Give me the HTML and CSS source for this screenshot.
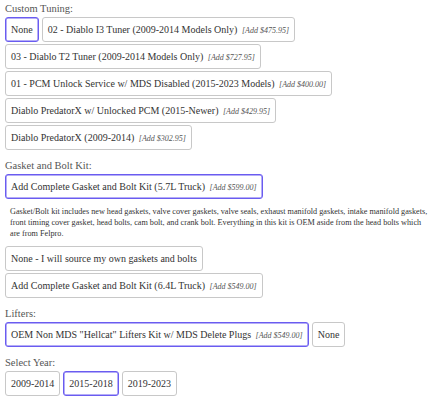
FILE: index.html
```html
<!DOCTYPE html>
<html lang="en">
<head>
    <meta charset="UTF-8">
    <meta name="viewport" content="width=device-width, initial-scale=1.0">
    <title>Product Options</title>
    <link rel="stylesheet" href="styles.css">
</head>
<body>

<form class="opcoes">
    <!-- Custom Tuning -->
    <div class="secao">
        <div class="titulo">Custom Tuning:</div>
        <div class="botoes">
            <button type="button" class="opcao ativa">None</button>
            <button type="button" class="opcao">02 - Diablo I3 Tuner (2009-2014 Models Only) <span class="preco">[Add $475.95]</span></button>
            <button type="button" class="opcao">03 - Diablo T2 Tuner (2009-2014 Models Only) <span class="preco">[Add $727.95]</span></button>
            <button type="button" class="opcao">01 - PCM Unlock Service w/ MDS Disabled (2015-2023 Models) <span class="preco">[Add $400.00]</span></button>
            <button type="button" class="opcao">Diablo PredatorX w/ Unlocked PCM (2015-Newer) <span class="preco">[Add $429.95]</span></button>
            <button type="button" class="opcao">Diablo PredatorX (2009-2014) <span class="preco">[Add $302.95]</span></button>
        </div>
    </div>

    <!-- Gasket and Bolt Kit -->
    <div class="secao">
        <div class="titulo">Gasket and Bolt Kit:</div>
        <div class="botoes">
            <button type="button" class="opcao ativa">Add Complete Gasket and Bolt Kit (5.7L Truck) <span class="preco">[Add $599.00]</span></button>
        </div>
        <p class="descricao">Gasket/Bolt kit includes new head gaskets, valve cover gaskets, valve seals, exhaust manifold gaskets, intake manifold gaskets, front timing cover gasket, head bolts, cam bolt, and crank bolt. Everything in this kit is OEM aside from the head bolts which are from Felpro.</p>
        <div class="botoes">
            <button type="button" class="opcao">None - I will source my own gaskets and bolts</button>
            <button type="button" class="opcao">Add Complete Gasket and Bolt Kit (6.4L Truck) <span class="preco">[Add $549.00]</span></button>
        </div>
    </div>

    <!-- Lifters -->
    <div class="secao">
        <div class="titulo">Lifters:</div>
        <div class="botoes">
            <button type="button" class="opcao ativa">OEM Non MDS "Hellcat" Lifters Kit w/ MDS Delete Plugs <span class="preco">[Add $549.00]</span></button>
            <button type="button" class="opcao">None</button>
        </div>
    </div>

    <!-- Select Year -->
    <div class="secao">
        <div class="titulo">Select Year:</div>
        <div class="botoes">
            <button type="button" class="opcao">2009-2014</button>
            <button type="button" class="opcao ativa">2015-2018</button>
            <button type="button" class="opcao">2019-2023</button>
        </div>
    </div>
</form>

</body>
</html>
```

FILE: styles.css
```css
/* Estilos Gerais */
body {
    font-family: "Liberation Serif", "Times New Roman", serif;
    background-color: #fff;
    color: #333;
    margin: 0;
    padding: 2px 5px;
}

.secao {
    margin-top: 7px;
}

.secao:first-child {
    margin-top: 0;
}

.titulo {
    font-size: 10.5px;
    line-height: 13px;
    color: #555;
    margin-bottom: 2px;
}

/* Botões de opção */
.botoes {
    display: flex;
    flex-wrap: wrap;
    column-gap: 3px;
}

.opcao {
    font-family: inherit;
    font-size: 10px;
    color: #333;
    background: #fff;
    height: 25px;
    padding: 0 5px;
    margin-bottom: 2px;
    border: 1px solid #c8c8c8;
    border-radius: 3px;
    white-space: nowrap;
    cursor: pointer;
}

.opcao.ativa {
    border-color: #6a5cf0;
    box-shadow: inset 0 0 0 0.5px #6a5cf0;
}

.preco {
    font-size: 8px;
    font-style: italic;
    color: #555;
    margin-left: 2px;
}

.descricao {
    font-size: 8.2px;
    line-height: 11px;
    color: #333;
    margin: 5px 0 7px;
    padding: 0 2px 0 5px;
}
```
